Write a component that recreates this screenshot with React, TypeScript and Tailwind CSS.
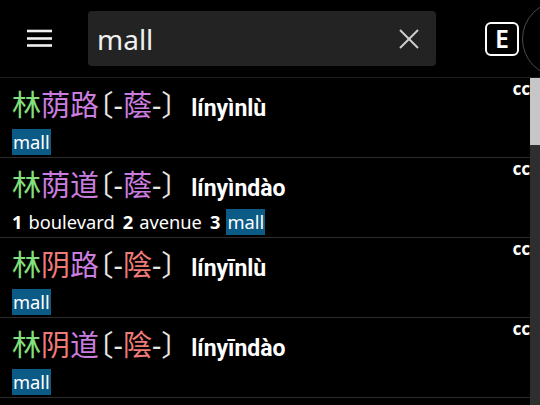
import React from "react";

type Seg = [string, "g" | "p" | "r"];
type Def = { n?: string; t: string; hl?: boolean };
type Row = { hw: Seg[]; alt: Seg; py: string; defs: Def[] };

const color: Record<string, string> = {
  g: "text-[#84e07c]",
  p: "text-[#c97ddf]",
  r: "text-[#ee7b78]",
};

const rows: Row[] = [
  { hw: [["林", "g"], ["荫", "p"], ["路", "p"]], alt: ["蔭", "p"], py: "línyìnlù", defs: [{ t: "mall", hl: true }] },
  {
    hw: [["林", "g"], ["荫", "p"], ["道", "p"]],
    alt: ["蔭", "p"],
    py: "línyìndào",
    defs: [
      { n: "1", t: "boulevard" },
      { n: "2", t: "avenue" },
      { n: "3", t: "mall", hl: true },
    ],
  },
  { hw: [["林", "g"], ["阴", "r"], ["路", "p"]], alt: ["陰", "r"], py: "línyīnlù", defs: [{ t: "mall", hl: true }] },
  { hw: [["林", "g"], ["阴", "r"], ["道", "p"]], alt: ["陰", "r"], py: "línyīndào", defs: [{ t: "mall", hl: true }] },
];

const CJK = "font-['Noto_Sans','Noto_Sans_CJK_SC',sans-serif]";

function Entry({ row }: { row: Row }) {
  return (
    <div className="flex border-b border-[#2b2b2b] pl-[12px]">
      <div className="flex-1 pt-[8px] pb-[1px]">
        <div className="flex h-[38px] items-baseline whitespace-nowrap">
          <span className={`${CJK} text-[29px] leading-[38px]`}>
            {row.hw.map(([c, k], i) => (
              <span key={i} className={color[k]}>
                {c}
              </span>
            ))}
            <span className="text-[#e8e8e8] [font-feature-settings:'halt']">〔</span>
            <span className="text-[#e8e8e8]">-</span>
            <span className={color[row.alt[1]]}>{row.alt[0]}</span>
            <span className="text-[#e8e8e8]">-</span>
            <span className="text-[#e8e8e8]">〕</span>
          </span>
          <span className="ml-[1px] font-['Roboto',sans-serif] text-[23px] font-bold text-white">{row.py}</span>
        </div>
        <div className="mt-[4px] flex h-[28px] items-center whitespace-nowrap font-['Noto_Sans',sans-serif] text-[18.3px] text-white">
          {row.defs.map((d, i) => (
            <span key={i} className="mr-[8px] flex items-center">
              {d.n && <span className="mr-[6px] font-bold">{d.n}</span>}
              {d.hl ? (
                <span className="h-[26px] bg-[#0c5a86] px-[1px] leading-[26px]">{d.t}</span>
              ) : (
                <span>{d.t}</span>
              )}
            </span>
          ))}
        </div>
      </div>
      <div className="self-start pt-[1px] font-['Noto_Sans',sans-serif] text-[17px] font-bold leading-[20px] text-white">cc</div>
    </div>
  );
}

export default function App() {
  return (
    <div className="flex h-[405px] w-[540px] flex-col overflow-hidden bg-black">
      <div className="flex h-[78px] shrink-0 items-center overflow-hidden border-b border-[#1f1f1f] pl-[27px]">
        <svg width="26" height="20" viewBox="0 0 26 20" className="mt-[-1px] shrink-0">
          <g stroke="#f2f2f2" strokeWidth="2.6">
            <line x1="0" y1="3" x2="25" y2="3" />
            <line x1="0" y1="10.5" x2="25" y2="10.5" />
            <line x1="0" y1="17.5" x2="25" y2="17.5" />
          </g>
        </svg>
        <div className="ml-[35px] flex h-[55px] w-[348px] shrink-0 items-center rounded-[4px] bg-[#232323] pl-[9px] pr-[17px]">
          <span className="flex-1 font-['Noto_Sans',sans-serif] text-[28px] leading-none text-[#f0f0f0]">mall</span>
          <svg width="20" height="20" viewBox="0 0 20 20">
            <g stroke="#cfcfcf" strokeWidth="2">
              <line x1="1" y1="1" x2="19" y2="19" />
              <line x1="19" y1="1" x2="1" y2="19" />
            </g>
          </svg>
        </div>
        <div className="ml-[49px] flex h-[34px] w-[34px] shrink-0 items-center justify-center rounded-[6px] border-[2.5px] border-white font-['Noto_Sans',sans-serif] text-[25px] font-semibold leading-none text-white">
          E
        </div>
        <div className="ml-[3px] h-[76px] w-[76px] shrink-0 rounded-full border border-[#4a4a4a]" />
      </div>
      <div className="flex min-h-0 flex-1">
        <div className="min-w-0 flex-1 overflow-hidden">
          {rows.map((r, i) => (
            <Entry key={i} row={r} />
          ))}
        </div>
        <div className="w-[10px] shrink-0 bg-[#2e2e2e]">
          <div className="h-[67px] bg-[#c6c6c6]" />
        </div>
      </div>
    </div>
  );
}
